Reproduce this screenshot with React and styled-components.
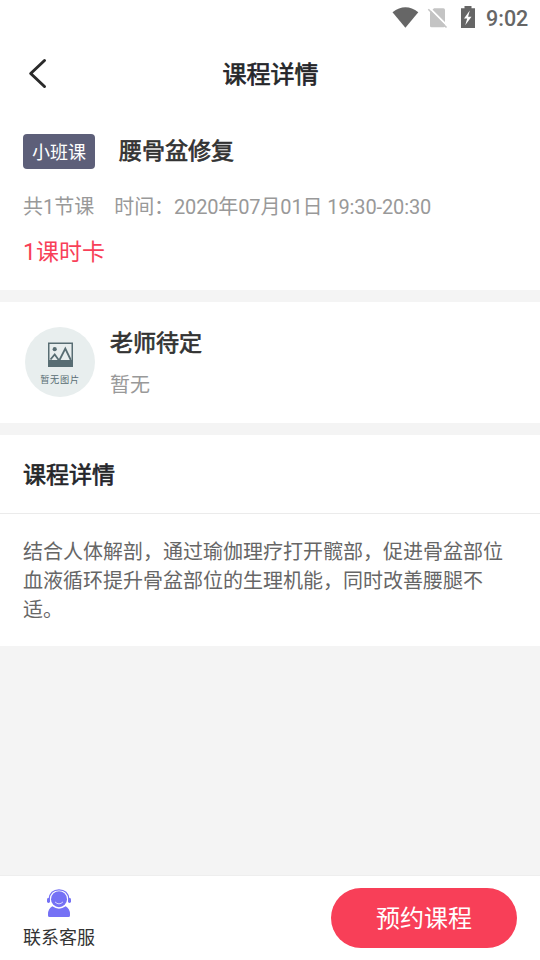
import React from "react";
import styled, { createGlobalStyle } from "styled-components";

const GlobalStyle = createGlobalStyle`
  * {
    box-sizing: border-box;
  }

  body {
    margin: 0;
    background-color: #f4f4f4;
    font-family: Roboto, "Noto Sans CJK SC", sans-serif;
  }
`;

const Page = styled.div`
  width: 540px;
  height: 960px;
  display: flex;
  flex-direction: column;
  overflow: hidden;
  background-color: #f4f4f4;
`;

const StatusBar = styled.div`
  height: 36px;
  flex: none;
  display: flex;
  justify-content: flex-end;
  background-color: #ffffff;

  svg {
    display: block;
  }
`;

const Clock = styled.span`
  width: 54px;
  padding-top: 1px;
  line-height: 36px;
  font-size: 21.5px;
  font-weight: 500;
  color: #666666;
`;

const NavBar = styled.header`
  height: 74px;
  flex: none;
  display: grid;
  grid-template-columns: 80px 1fr 80px;
  align-items: center;
  padding-top: 2px;
  background-color: #ffffff;
`;

const BackButton = styled.button`
  width: 60px;
  height: 60px;
  padding: 0 0 0 22px;
  border: none;
  background-color: transparent;

  svg {
    display: block;
  }
`;

// the stroke gives a medium weight, lighter than the bold face
const Title = styled.h2`
  margin: 0;
  font-size: ${props => props.$size || 23}px;
  line-height: 34px;
  font-weight: 400;
  color: ${props => props.$color || "#333333"};
  -webkit-text-stroke: 0.7px ${props => props.$color || "#333333"};
`;

const NavTitle = styled(Title)`
  padding: 2px 0 0 1px;
  text-align: center;
`;

const Summary = styled.section`
  height: 180px;
  flex: none;
  padding: 24px 23px 0;
  background-color: #ffffff;
`;

const TitleRow = styled.div`
  display: flex;
  gap: 24px;

  ${Title} {
    padding-top: 1px;
  }
`;

const Tag = styled.span`
  width: 72px;
  height: 35px;
  border-radius: 4px;
  text-align: center;
  font-size: 18px;
  line-height: 38px;
  color: #ffffff;
  background-color: #5d5f79;
`;

const Meta = styled.div`
  display: flex;
  gap: 20px;
  margin-top: 23px;
  font-size: 20px;
  line-height: 30px;
  color: #999999;
  white-space: nowrap;
`;

const Time = styled.span`
  letter-spacing: -0.12px;
`;

const Price = styled.div`
  margin-top: 14px;
  font-size: 23px;
  line-height: 34px;
  color: #f83f58;
`;

const Teacher = styled.section`
  height: 121px;
  flex: none;
  display: flex;
  gap: 15px;
  margin: 12px 0;
  padding: 25px 25px 0;
  background-color: #ffffff;
`;

const Avatar = styled.div`
  width: 70px;
  height: 70px;
  display: flex;
  flex-direction: column;
  align-items: center;
  padding-top: 15px;
  border-radius: 50%;
  font-size: 9.2px;
  line-height: 14px;
  letter-spacing: 0.7px;
  color: #586d73;
  background-color: #e8eeee;

  svg {
    display: block;
    margin-bottom: 5px;
  }
`;

const TeacherNote = styled.div`
  margin-top: 9px;
  font-size: 20px;
  line-height: 30px;
  color: #999999;
`;

const Details = styled.section`
  height: 211px;
  flex: none;
  background-color: #ffffff;
`;

const DetailsHead = styled.div`
  height: 79px;
  padding: 24px 23px 0;
  border-bottom: 1px solid #ebebeb;
`;

const Description = styled.p`
  margin: 0;
  padding: 24px 23px 0;
  font-size: 20px;
  line-height: 29px;
  color: #666666;
`;

const Footer = styled.footer`
  height: 85px;
  flex: none;
  display: flex;
  justify-content: space-between;
  margin-top: auto;
  padding: 12px 23px 0;
  border-top: 1px solid #eeeeee;
  background-color: #ffffff;
`;

const Contact = styled.div`
  display: flex;
  flex-direction: column;
  align-items: center;
  font-size: 18px;
  line-height: 26px;
  color: #333333;

  svg {
    display: block;
    margin: 1px 0 8px;
  }
`;

const BookButton = styled.button`
  width: 186px;
  height: 60px;
  padding: 2px 0 0;
  border: none;
  border-radius: 30px;
  font-family: inherit;
  font-size: 24px;
  line-height: 58px;
  color: #ffffff;
  background-color: #f83f58;
`;

const StatusIcons = () => (
  <svg width="94" height="36" viewBox="392 0 94 36">
    <path d="M392.5 12.2Q405.5 2.2 418.3 12.2L405.4 27.8Z" fill="#666666" />
    <path
      d="M434 8.3H443.3Q445 8.3 445 10V26Q445 27.300 443.500 27.300H431.500Q430 27.300 430 26V12.300Z"
      fill="#c4c4c4"
    />
    <path d="M430 8.5L447 25.500" stroke="#ffffff" strokeWidth="1.8" />
    <path d="M428.3 9.3L446.5 27.5" stroke="#c4c4c4" strokeWidth="1.6" />
    <path
      d="M461 8.2H464.5V6H471.5V8.2H475V28H461Z"
      fill="#666666"
    />
    <path d="M469.8 10.6L464 18.6H467.2L465.2 25.3L471.5 16.7H468.1Z" fill="#ffffff" />
  </svg>
);

const BackIcon = () => (
  <svg width="30" height="32" viewBox="22 58 30 32">
    <path
      d="M44.5 60.5L30.7 73.5L44.5 86.5"
      fill="none"
      stroke="#2a2a2a"
      strokeWidth="3"
      strokeLinecap="round"
      strokeLinejoin="round"
    />
  </svg>
);

const PictureIcon = () => (
  <svg width="26" height="26" viewBox="0 0 26 26">
    <path d="M1 0.5H26V25H1Z" fill="#586d73" />
    <path d="M2.5 2H24.500V18H2.5Z" fill="#e8eeee" />
    <circle cx="7.7" cy="7.2" r="2.1" fill="#586d73" />
    <path
      d="M3.500 17.5L7.700 12.5L11.700 18M12.500 18L18.300 6.5L23.800 18"
      fill="none"
      stroke="#586d73"
      strokeWidth="1.8"
    />
  </svg>
);

const ServiceIcon = () => (
  <svg width="26" height="28" viewBox="0 0 26 28">
    <path
      d="M3 10.5C3.5 4.3 7.5 0.9 13 0.9S22.5 4.3 23 10.5"
      fill="none"
      stroke="#7571f5"
      strokeWidth="1.4"
    />
    <rect x="1" y="9" width="3" height="5" rx="1.4" fill="#7571f5" />
    <rect x="22" y="9" width="3" height="5" rx="1.4" fill="#7571f5" />
    <circle cx="13" cy="10.2" r="8" fill="#7571f5" />
    <path
      d="M9.3 13.2Q13 16.8 16.7 13.2"
      fill="none"
      stroke="#d6d5fc"
      strokeWidth="1"
      strokeLinecap="round"
    />
    <path
      d="M6.3 17.3Q13 22 19.7 17.3Q24 20 24 25V26.5Q24 28 22.5 28H3.5Q2 28 2 26.5V25Q2 20 6.3 17.3Z"
      fill="#7571f5"
    />
  </svg>
);

const App = () => (
  <Page>
    <GlobalStyle />
    <StatusBar>
      <StatusIcons />
      <Clock>9:02</Clock>
    </StatusBar>
    <NavBar>
      <BackButton aria-label="返回">
        <BackIcon />
      </BackButton>
      <NavTitle as="h1" $size={24} $color="#25262a">
        课程详情
      </NavTitle>
    </NavBar>

    <Summary>
      <TitleRow>
        <Tag>小班课</Tag>
        <Title>腰骨盆修复</Title>
      </TitleRow>
      <Meta>
        <span>共1节课</span>
        <Time>时间：2020年07月01日 19:30-20:30</Time>
      </Meta>
      <Price>1课时卡</Price>
    </Summary>

    <Teacher>
      <Avatar>
        <PictureIcon />
        暂无图片
      </Avatar>
      <div>
        <Title>老师待定</Title>
        <TeacherNote>暂无</TeacherNote>
      </div>
    </Teacher>

    <Details>
      <DetailsHead>
        <Title $color="#25262a">课程详情</Title>
      </DetailsHead>
      <Description>
        结合人体解剖，通过瑜伽理疗打开髋部，促进骨盆部位血液循环提升骨盆部位的生理机能，同时改善腰腿不适。
      </Description>
    </Details>

    <Footer>
      <Contact>
        <ServiceIcon />
        联系客服
      </Contact>
      <BookButton>预约课程</BookButton>
    </Footer>
  </Page>
);

export default App;
